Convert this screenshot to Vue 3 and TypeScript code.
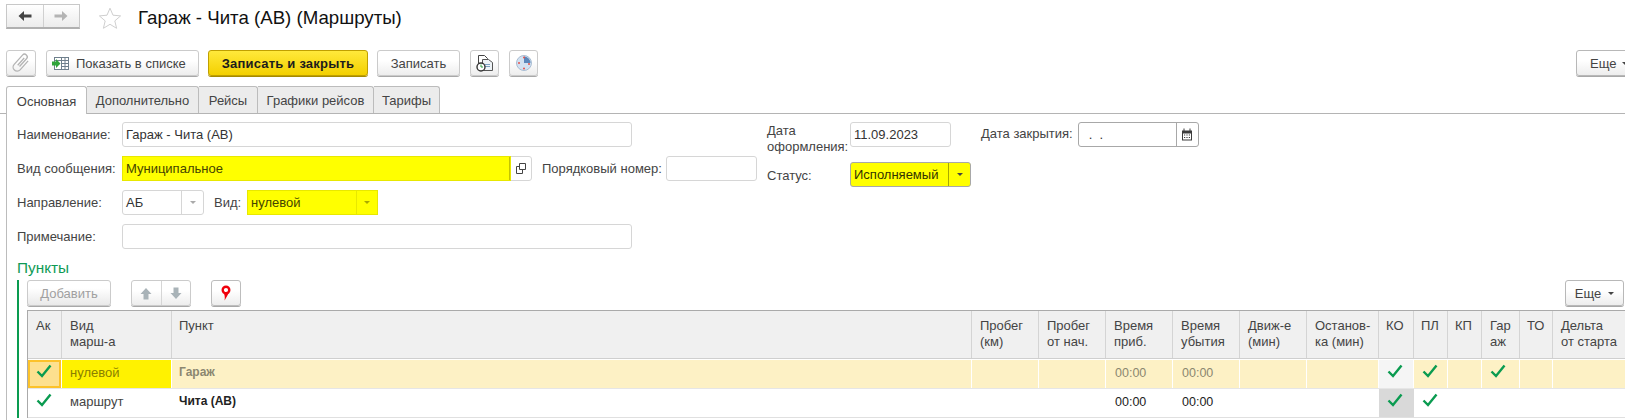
<script setup lang="ts">
interface Column { key: string; title: string; cls: string }
interface Row { cls: string; cells: Record<string, string> }

const tabs: string[] = ['Основная', 'Дополнительно', 'Рейсы', 'Графики рейсов', 'Тарифы']

const columns: Column[] = [
  { key: 'ak', title: 'Ак', cls: '' },
  { key: 'vid', title: 'Вид\nмарш-а', cls: '' },
  { key: 'point', title: 'Пункт', cls: 'tight' },
  { key: 'km', title: 'Пробег\n(км)', cls: '' },
  { key: 'fromStart', title: 'Пробег\nот нач.', cls: '' },
  { key: 'arr', title: 'Время\nприб.', cls: '' },
  { key: 'dep', title: 'Время\nубытия', cls: '' },
  { key: 'move', title: 'Движ-е\n(мин)', cls: '' },
  { key: 'stop', title: 'Останов-\nка (мин)', cls: '' },
  { key: 'ko', title: 'КО', cls: 'tight' },
  { key: 'pl', title: 'ПЛ', cls: 'tight' },
  { key: 'kp', title: 'КП', cls: 'tight' },
  { key: 'gar', title: 'Гар\nаж', cls: '' },
  { key: 'to', title: 'ТО', cls: 'tight' },
  { key: 'delta', title: 'Дельта\nот старта', cls: '' },
]

const rows: Row[] = [
  {
    cls: 'row-current',
    cells: { ak: '✓', vid: 'нулевой', point: 'Гараж', arr: '00:00', dep: '00:00', ko: '✓', pl: '✓', gar: '✓' },
  },
  {
    cls: 'row-plain',
    cells: { ak: '✓', vid: 'маршрут', point: 'Чита (АВ)', arr: '00:00', dep: '00:00', ko: '✓', pl: '✓' },
  },
]
</script>

<template>
  <div class="page">
    <header class="head">
      <div class="nav">
        <span class="nav-part">
          <svg width="16" height="12" viewBox="0 0 16 12"><path d="M7 1 1.500 6 7 11V7.600h7.500V4.400H7z" fill="#444" /></svg>
        </span>
        <span class="nav-part">
          <svg width="16" height="12" viewBox="0 0 16 12"><path d="M9 1l5.500 5L9 11V7.600H1.500V4.400H9z" fill="#b4b4b4" /></svg>
        </span>
      </div>
      <svg class="star" width="24" height="22" viewBox="0 0 24 22">
        <path d="M12 1.200l3 7 7.600.7-5.800 5 1.800 7.400-6.600-4-6.600 4 1.800-7.400-5.800-5L9 8.200z" fill="#fff" stroke="#cfcfcf" />
      </svg>
      <h1 class="title">Гараж - Чита (АВ) (Маршруты)</h1>
    </header>

    <div class="toolbar">
      <button class="btn btn-clip">
        <svg width="20" height="22" viewBox="0 0 20 22">
          <path d="M8.500 14.500 15.500 6.800a2.700 2.700 0 0 0-4-3.700L3.200 12.400a4 4 0 0 0 5.900 5.500l8-9" fill="none" stroke="#b4b4b4" stroke-width="1.300" />
          <path d="M6.700 13.300 13.200 6" fill="none" stroke="#b4b4b4" stroke-width="1.300" />
        </svg>
      </button>
      <button class="btn btn-show">
        <svg width="17" height="15" viewBox="0 0 17 15">
          <rect x="2.500" y="1.500" width="14" height="12" fill="#fff" stroke="#6f7f8c" />
          <path d="M2.500 4.500h14M9.500 1.500v12M13 1.500v12M9.500 7.500h7M9.500 10.500h7" stroke="#6f7f8c" fill="none" />
          <path d="M0 5.500h4V3l4.500 4.500L4 12V9.500H0z" fill="#2fa33a" />
        </svg>
        <span>Показать в списке</span>
      </button>
      <button class="btn btn-primary">Записать и закрыть</button>
      <button class="btn btn-save">Записать</button>
      <button class="btn btn-icon btn-doc">
        <svg width="18" height="19" viewBox="0 0 18 19">
          <path d="M2.500 1.500h6l3 3v5h-9z" fill="#fff" stroke="#444" />
          <path d="M6.500 5.500h6l4 3v8h-10z" fill="#eef3f6" stroke="#555" />
          <path d="M9 10.500h5M9 12.500h5" stroke="#7aa0bf" />
          <circle cx="5" cy="13" r="4" fill="#fff" stroke="#333" stroke-width="1.400" />
          <path d="M5 10.500V13h2" stroke="#2a9a3c" fill="none" />
        </svg>
      </button>
      <button class="btn btn-icon btn-pie">
        <svg width="18" height="18" viewBox="0 0 18 18">
          <circle cx="9" cy="9" r="7.500" fill="#d3e2f2" stroke="#a9bdd3" />
          <path d="M9 9V2.500A6.500 6.500 0 0 1 15.500 9z" fill="#5c87bb" />
          <circle cx="9" cy="3.500" r="1" fill="#e8504a" />
          <circle cx="4" cy="9" r="1" fill="#e8504a" />
          <circle cx="14" cy="10" r="1" fill="#e8504a" />
          <circle cx="9" cy="14.500" r="1" fill="#e8504a" />
        </svg>
      </button>
      <button class="btn btn-more">Еще <i class="caret"></i></button>
    </div>

    <nav class="tabs">
      <span v-for="(tab, i) in tabs" :key="tab" class="tab" :class="{ active: i === 0 }">{{ tab }}</span>
    </nav>

    <section class="panel">
      <div class="form">
        <div class="col-left">
          <div class="row">
            <label class="label">Наименование:</label>
            <div class="field f-name"><span class="val">Гараж - Чита (АВ)</span></div>
          </div>
          <div class="row">
            <label class="label">Вид сообщения:</label>
            <div class="field f-kind hl">
              <span class="val grow hl-part">Муниципальное</span>
              <span class="addon">
                <svg width="13" height="13" viewBox="0 0 13 13">
                  <path d="M5.500 1.500h6v6h-6z M5.500 4.500h-3v7h6V8" fill="none" stroke="#444" />
                </svg>
              </span>
            </div>
            <label class="label l-order">Порядковый номер:</label>
            <div class="field f-order"></div>
          </div>
          <div class="row">
            <label class="label">Направление:</label>
            <div class="field f-dir">
              <span class="val grow">АБ</span>
              <span class="addon drop"><i class="caret light"></i></span>
            </div>
            <label class="label l-vid">Вид:</label>
            <div class="field f-vid hl">
              <span class="val grow hl-part">нулевой</span>
              <span class="addon drop hl-part"><i class="caret olive"></i></span>
            </div>
          </div>
          <div class="row">
            <label class="label">Примечание:</label>
            <div class="field f-name"></div>
          </div>
        </div>

        <div class="col-right">
          <div class="row row-top">
            <label class="label l-date">Дата<br />оформления:</label>
            <div class="field f-date"><span class="val">11.09.2023</span></div>
            <label class="label l-close">Дата закрытия:</label>
            <div class="field f-close dark">
              <span class="val grow dots">. &nbsp;.</span>
              <span class="addon cal">
                <svg width="12" height="13" viewBox="0 0 12 13">
                  <path d="M1 2.500h10v10H1z" fill="#3c3c3c" />
                  <path d="M3 .5v3M9 .5v3" stroke="#3c3c3c" />
                  <path d="M2 5.500h8v6H2z" fill="#fff" />
                  <path d="M3 7h1.200M5.400 7h1.200M7.800 7H9M3 9.500h1.200M5.400 9.500h1.200M7.800 9.500H9" stroke="#3c3c3c" />
                </svg>
              </span>
            </div>
          </div>
          <div class="row">
            <label class="label l-date">Статус:</label>
            <div class="field f-status dark status">
              <span class="val grow">Исполняемый</span>
              <span class="addon drop"><i class="caret"></i></span>
            </div>
          </div>
        </div>
      </div>

      <h2 class="section-title">Пункты</h2>
      <div class="group">
        <div class="commands">
          <button class="btn btn-add" disabled>Добавить</button>
          <div class="btn updown">
            <span class="ud-part">
              <svg width="12" height="13" viewBox="0 0 12 13"><path d="M6 1l5.500 6H8.500v5.500h-5V7H.5z" fill="#a9b3b8" /></svg>
            </span>
            <span class="ud-part">
              <svg width="12" height="13" viewBox="0 0 12 13"><path d="M6 12l5.500-6H8.500V.5h-5V6H.5z" fill="#a9b3b8" /></svg>
            </span>
          </div>
          <button class="btn btn-pin">
            <svg width="10" height="16" viewBox="0 0 10 16">
              <circle cx="5" cy="5" r="3.300" fill="#fff" stroke="#f0000c" stroke-width="2.400" />
              <path d="M7.800 7.500C7 10 5.300 12 3.600 15.500 4 12.500 3.800 10.800 3 8.500z" fill="#f0000c" />
            </svg>
          </button>
          <button class="btn btn-more2">Еще <i class="caret"></i></button>
        </div>

        <div class="table">
          <div class="tr thead">
            <div v-for="c in columns" :key="c.key" class="th" :class="c.cls">{{ c.title }}</div>
          </div>
          <div v-for="r in rows" :key="r.cells.point" class="tr" :class="r.cls">
            <div v-for="c in columns" :key="c.key" class="td" :class="['c-' + c.key]">
              <svg v-if="r.cells[c.key] === '✓'" class="check" width="16" height="14" viewBox="0 0 16 14">
                <path d="M1.500 7.500 6 12 14.500 1.500" fill="none" stroke="#0a9b50" stroke-width="2.400" />
              </svg>
              <span v-else>{{ r.cells[c.key] }}</span>
            </div>
          </div>
        </div>
      </div>
    </section>
  </div>
</template>

<style>
html, body { margin: 0; background: #fff; }
</style>

<style scoped>
.page {
  width: 1625px;
  height: 420px;
  overflow: hidden;
  background: #fff;
  font-family: "Liberation Sans", Arial, sans-serif;
  font-size: 13px;
  color: #444;
  box-sizing: border-box;
}
.head { display: flex; align-items: center; height: 25px; padding: 4px 0 0 6px; }
.nav {
  display: flex;
  width: 74px;
  height: 25px;
  box-sizing: border-box;
  border: 1px solid #c8c8c8;
  border-bottom: 2px solid #b0b0b0;
  background: linear-gradient(#fff, #ececec);
}
.nav-part { flex: 1; display: flex; align-items: center; justify-content: center; }
.nav-part + .nav-part { border-left: 1px solid #d0d0d0; }
.star { margin: 2px 0 0 18px; }
.title { margin: 2px 0 0 16px; font-size: 18.67px; font-weight: 400; color: #111; white-space: nowrap; }

.btn {
  display: inline-flex;
  align-items: center;
  justify-content: center;
  box-sizing: border-box;
  height: 26px;
  padding: 0;
  border: 1px solid #cbcbcb;
  border-radius: 3px;
  background: linear-gradient(#fff 40%, #ededed);
  box-shadow: 0 1px 0 #a8a8a8;
  font: inherit;
  color: #444;
  white-space: nowrap;
}
.toolbar { display: flex; margin: 21px 0 0 6px; height: 26px; }
.btn-clip { width: 30px; }
.btn-show { width: 153px; margin-left: 10px; gap: 7px; justify-content: flex-start; padding-left: 5px; }
.btn-primary {
  width: 160px;
  margin-left: 9px;
  font-weight: 700;
  letter-spacing: .2px;
  color: #1c1c1c;
  background: linear-gradient(#ffe93b, #f3d000);
  border-color: #c0a000;
  box-shadow: 0 1px 0 #a58a00;
}
.btn-save { width: 83px; margin-left: 9px; }
.btn-icon { width: 29px; }
.btn-doc { margin-left: 10px; }
.btn-pie { margin-left: 10px; }
.btn-more { width: 60px; margin-left: auto; margin-right: -11px; gap: 6px; justify-content: flex-start; padding-left: 13px; border-color: #b8b8b8; }
.caret {
  display: inline-block;
  width: 0;
  height: 0;
  border-left: 3px solid transparent;
  border-right: 3px solid transparent;
  border-top: 3px solid #444;
}
.caret.light { border-top-color: #aaa; }
.caret.olive { border-top-color: #a9a900; }

.tabs {
  display: flex;
  margin-top: 10px;
  height: 28px;
  box-sizing: border-box;
  padding-left: 6px;
  border-bottom: 1px solid #b4b4b4;
}
.tab {
  display: flex;
  align-items: center;
  justify-content: center;
  box-sizing: border-box;
  height: 27px;
  padding-top: 1px;
  background: #ececec;
  border: 1px solid #bcbcbc;
  border-left: 0;
  border-bottom: 0;
  border-radius: 0 3px 0 0;
  white-space: nowrap;
}
.tab:nth-child(1) { width: 81px; }
.tab:nth-child(2) { width: 112px; }
.tab:nth-child(3) { width: 59px; }
.tab:nth-child(4) { width: 116px; }
.tab:nth-child(5) { width: 66px; }
.tab.active {
  height: 28px;
  background: #fff;
  border-left: 1px solid #bcbcbc;
  border-radius: 3px 3px 0 0;
}

.panel {
  margin-left: 6px;
  padding: 8px 0 0 10px;
  border-left: 1px solid #bcbcbc;
  height: 300px;
}
.form { display: flex; }
.col-left { width: 740px; display: flex; flex-direction: column; gap: 9px; }
.col-right { margin-left: 10px; display: flex; flex-direction: column; gap: 8px; }
.row { display: flex; align-items: center; height: 25px; }
.row-top { align-items: flex-start; height: 33px; }
.label { width: 105px; flex: none; white-space: nowrap; line-height: 16px; }
.field {
  display: flex;
  align-items: center;
  box-sizing: border-box;
  height: 25px;
  border: 1px solid #d6d6d6;
  border-radius: 3px;
  background: #fff;
  color: #333;
  flex: none;
}
.val { padding-left: 3px; white-space: nowrap; }
.grow { flex: 1; display: flex; align-items: center; height: 100%; min-width: 0; }
.addon { flex: none; display: flex; align-items: center; justify-content: center; height: 100%; }

.f-name { width: 510px; }
.f-kind { width: 410px; }
.f-kind .addon { width: 21px; }
.hl-part {
  background: #ffff00;
  box-shadow: 0 0 0 1px #e8e800;
  color: #444400;
  border-right: 1px solid #c4c400;
}
.f-kind .hl-part { padding-left: 3px; }
.l-order { width: auto; margin-left: 10px; margin-right: 4px; }
.f-order { width: 91px; }
.f-dir { width: 82px; }
.f-dir .addon { width: 21px; border-left: 1px solid #d6d6d6; }
.l-vid { width: 33px; margin-left: 10px; }
.f-vid { width: 131px; }
.f-vid .grow { padding-left: 3px; }
.f-vid .addon { width: 20px; border-right: 0; }

.l-date { width: 83px; }
.row-top .l-date { padding-top: 1px; }
.f-date { width: 101px; }
.l-close { width: auto; margin-left: 30px; margin-right: 5px; padding-top: 4px; }
.f-close { width: 121px; }
.dark { border-color: #a8a8a8; }
.dots { padding-left: 10px; }
.cal { width: 21px; border-left: 1px solid #a8a8a8; }
.f-status { width: 121px; margin-top: -2px; }
.status { background: #ffff00; color: #333300; overflow: hidden; }
.status .addon { width: 21px; border-left: 1px solid #a8a800; }

.section-title {
  margin: 9px 0 3px;
  font-size: 15.33px;
  line-height: 19px;
  font-weight: 400;
  color: #0e9a55;
}
.group { border-left: 2px solid #0a9b50; padding-left: 8px; width: 1608px; box-sizing: border-box; }
.commands { display: flex; height: 27px; }
.btn-add { width: 84px; color: #a0a0a0; background: linear-gradient(#fff 30%, #e9e9e9); }
.updown { width: 60px; margin-left: 20px; }
.ud-part { flex: 1; height: 100%; display: flex; align-items: center; justify-content: center; }
.ud-part + .ud-part { border-left: 1px solid #d6d6d6; }
.btn-pin { width: 30px; margin-left: 20px; border-color: #bdbdbd; }
.btn-more2 { width: 59px; margin-left: auto; margin-right: 1px; gap: 7px; border-color: #b8b8b8; }

.table { margin-top: 3px; border-top: 1px solid #aaa; border-left: 1px solid #aaa; }
.tr {
  display: grid;
  grid-template-columns: 34px 110px 800px 67px 67px 67px 67px 67px 72px 35px 34px 34px 38px 33px 73px;
}
.thead { height: 48px; box-sizing: border-box; border-bottom: 1px solid #cfcfcf; }
.th {
  box-sizing: border-box;
  padding: 7px 0 0 8px;
  background: #f0f0f0;
  border-right: 1px solid #d4d4d4;
  white-space: pre-line;
  line-height: 16px;
}
.th.tight { padding-left: 7px; }
.td {
  box-sizing: border-box;
  height: 28px;
  padding: 0 0 3px 9px;
  display: flex;
  align-items: center;
  white-space: nowrap;
}
.row-current { background: #fdf1c5; border-top: 1px solid #fff; color: #8b8770; }
.row-plain { border-top: 1px solid #e6e6e6; border-bottom: 1px solid #e0e0e0; color: #222; }
.row-current .td { border-right: 1px solid #fff; }
.check { margin-top: -3px; margin-left: -1px; }
.c-point { padding-left: 7px; font-weight: 700; font-size: 12px; padding-bottom: 4px; }
.c-arr, .c-dep { font-size: 12.5px; }
.c-vid { color: #444; padding-left: 8px; }
.row-current .c-vid { background: #fff200; color: #8a8000; }
.row-current .c-ak { background: #fde08f; box-shadow: inset 0 0 0 2px #fcc22a; }
.row-current .c-ko { background: #f5f5f5; }
.row-plain .c-ko { background: #d9d9d9; }
</style>
